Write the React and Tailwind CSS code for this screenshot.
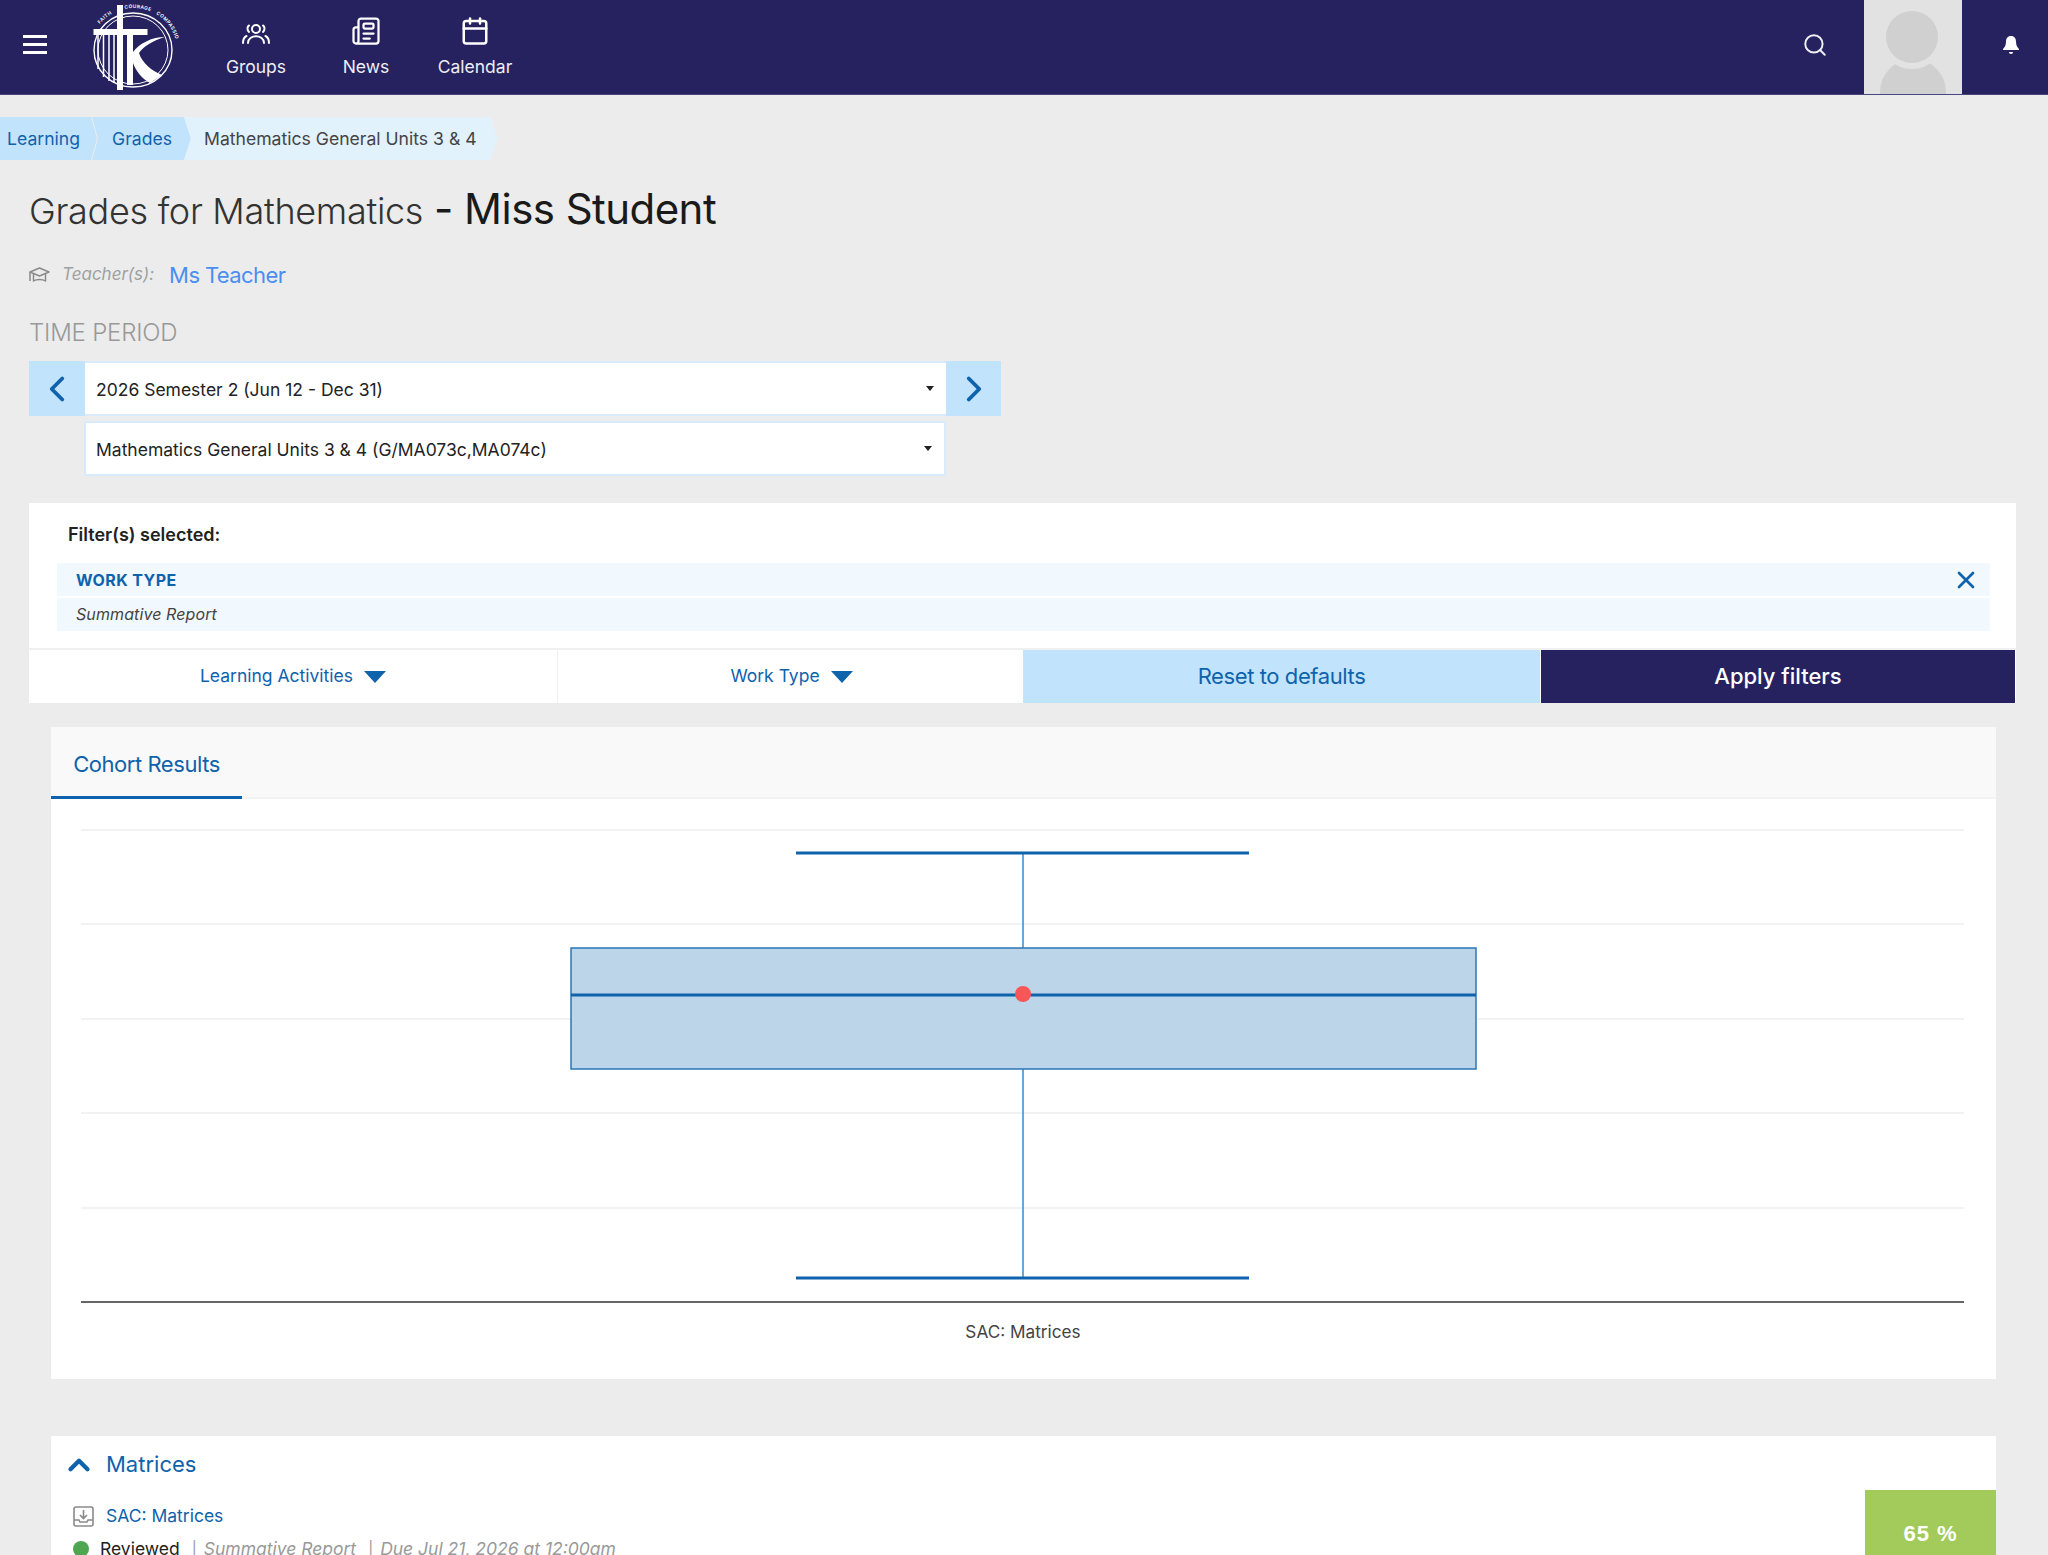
import React from "react";
import { ChevronLeft, ChevronRight, ChevronUp, Newspaper, Calendar, Search, X } from "lucide-react";

const BLUE = "#0f62ac";

const Logo = () => (
  <svg width="86" height="90" viewBox="0 0 86 90" className="shrink-0 overflow-visible">
    <defs>
      <path id="logoArc" d="M5 25 A43 41 0 0 1 84 38" />
    </defs>
    <ellipse cx="41" cy="47" rx="39" ry="37" fill="none" stroke="#fff" strokeWidth="1.400" />
    <ellipse cx="41" cy="47" rx="35" ry="34" fill="none" stroke="#fff" strokeWidth="1" />
    <g fontSize="4.800" fontFamily="Inter, sans-serif" fontWeight="600" fill="#fff" letterSpacing="0.4">
      <text><textPath href="#logoArc" startOffset="5%">FAITH</textPath></text>
      <text><textPath href="#logoArc" startOffset="34%">COURAGE</textPath></text>
      <text><textPath href="#logoArc" startOffset="66%">COMPASSION</textPath></text>
    </g>
    <path d="M6 32v34M11.500 32v42M17 32v46M22 32v48" stroke="#fff" strokeWidth="1.500" />
    <rect x="25" y="2" width="6" height="85" fill="#fff" />
    <rect x="1.500" y="26" width="54" height="6" fill="#fff" />
    <rect x="35" y="32" width="6" height="50" fill="#fff" />
    <path d="M41 49 C48 40 60 34 73 34 C60 38 51 44 47 50 C50 60 60 68 70 72 L58 80 C50 76 44 68 41 60 Z" fill="#fff" />
  </svg>
);

const GroupsIcon = () => (
  <svg width="30" height="24" viewBox="0 0 30 24" fill="none" stroke="#fff" strokeWidth="2" strokeLinecap="round">
    <circle cx="15" cy="7" r="4" />
    <path d="M8 3.500c-2 1-2 5 0 6.500M22 3.500c2 1 2 5 0 6.500" />
    <path d="M7 21c0-9 16-9 16 0" />
    <path d="M2 21c0-4 1.500-6 3.500-7M28 21c0-4-1.500-6-3.500-7" />
  </svg>
);

const NavItem = ({ icon, label, className }) => (
  <div className={`flex flex-col items-center ${className}`}>
    <div className="h-[30px] flex items-end justify-center">{icon}</div>
    <span className="mt-[10px] text-[17.500px] leading-[22px] text-[#eeeef4]">{label}</span>
  </div>
);

const Crumb = ({ children, className }) => (
  <div className={`h-[43px] flex items-center pt-[1px] text-[17.600px] ${className}`}>{children}</div>
);

const SelectBox = ({ children, className }) => (
  <div className={`h-[55px] bg-white border-y-2 border-[#d9ebfa] flex items-center justify-between pr-[12px] text-[17.500px] text-[#222] ${className}`}>
    <span className="pt-[3px]">{children}</span>
    <span className="w-0 h-0 border-l-[4px] border-r-[4px] border-t-[5px] border-l-transparent border-r-transparent border-t-[#222]" />
  </div>
);

const FilterToggle = ({ label, className }) => (
  <div className={`h-full flex items-center justify-center gap-[11px] text-[17.500px] text-[#0f62ac] ${className}`}>
    {label}
    <span className="w-0 h-0 border-l-[11px] border-r-[11px] border-t-[12px] border-l-transparent border-r-transparent border-t-[#0f62ac]" />
  </div>
);

const BoxPlot = () => (
  <svg width="1945" height="580" viewBox="0 0 1945 580" className="block">
    {[31, 125, 220, 314, 409].map((y) => (
      <line key={y} x1="30" x2="1913" y1={y} y2={y} stroke="#eeeeee" strokeWidth="1.500" />
    ))}
    <line x1="30" x2="1913" y1="503" y2="503" stroke="#666" strokeWidth="2" />
    <line x1="972" x2="972" y1="54" y2="149" stroke="#3d88c6" strokeWidth="1.500" />
    <line x1="972" x2="972" y1="270" y2="479" stroke="#3d88c6" strokeWidth="1.500" />
    <line x1="745" x2="1198" y1="54" y2="54" stroke={BLUE} strokeWidth="3" />
    <line x1="745" x2="1198" y1="479" y2="479" stroke={BLUE} strokeWidth="3" />
    <rect x="520" y="149" width="905" height="121" fill="#bdd5e9" stroke="#2a76b8" strokeWidth="1.500" />
    <line x1="520" x2="1425" y1="196" y2="196" stroke={BLUE} strokeWidth="3" />
    <circle cx="972" cy="195" r="8" fill="#f95757" />
    <text x="972" y="539" textAnchor="middle" fontSize="17.200" fontFamily="Inter, sans-serif" fill="#444">SAC: Matrices</text>
  </svg>
);

export default function App() {
  return (
    <div className="h-[1555px] overflow-hidden bg-[#ececec] font-['Inter',sans-serif] text-[#222]">
      {/* top nav */}
      <header className="h-[95px] bg-[#262260] border-b border-[#4a4680] flex items-start">
        <div className="pl-[23px] pt-[35px] flex flex-col gap-[5px] w-[92px] shrink-0">
          <span className="w-[24px] h-[3px] bg-white" />
          <span className="w-[24px] h-[3px] bg-white" />
          <span className="w-[24px] h-[3px] bg-white" />
        </div>
        <div className="pt-[3px]"><Logo /></div>
        <div className="flex pt-[16px]">
          <NavItem icon={<GroupsIcon />} label="Groups" className="w-[110px] ml-[23px]" />
          <NavItem icon={<Newspaper size={30} color="#fff" strokeWidth={1.800} />} label="News" className="w-[110px]" />
          <NavItem icon={<Calendar size={30} color="#fff" strokeWidth={2} />} label="Calendar" className="w-[108px]" />
        </div>
        <div className="ml-auto flex h-[94px]">
          <div className="w-[50px] flex items-center justify-start mr-[13px] pb-[4px]">
            <Search size={26} color="#eeeef4" strokeWidth={1.800} className="ml-[1px]" />
          </div>
          <div className="w-[98px] h-[94px] bg-[#e2e2e2] relative overflow-hidden">
            <span className="absolute left-[16px] top-[59px] w-[66px] h-[66px] rounded-full bg-[#d0d0d0]" />
            <span className="absolute left-[15px] top-[3px] w-[66px] h-[66px] rounded-full bg-[#e2e2e2]" />
            <span className="absolute left-[22px] top-[11px] w-[52px] h-[52px] rounded-full bg-[#d0d0d0]" />
          </div>
          <div className="w-[86px] flex items-center justify-center pl-[12px] pb-[4px]">
            <svg width="18" height="20" viewBox="0 0 18 20" fill="#fff">
              <path d="M9 1c-3.500 0-5 2.500-5 5.500 0 4-1.500 6-3 7.500v1h16v-1c-1.500-1.500-3-3.500-3-7.500C14 3.500 12.500 1 9 1z" />
              <path d="M7 17h4c0 1-.8 2-2 2s-2-1-2-2z" />
            </svg>
          </div>
        </div>
      </header>

      {/* breadcrumb */}
      <nav className="flex mt-[22px] h-[43px]">
        <Crumb className="w-[97px] pl-[7px] bg-[#c2e3fc] text-[#0f62ac] [clip-path:polygon(0_0,91px_0,97px_50%,91px_100%,0_100%)]">Learning</Crumb>
        <Crumb className="w-[99px] -ml-[5px] pl-[20px] bg-[#c2e3fc] text-[#0f62ac] [clip-path:polygon(0_0,92px_0,99px_50%,92px_100%,0_100%,6px_50%)]">Grades</Crumb>
        <Crumb className="w-[314px] -ml-[7px] pl-[20px] bg-[#e2f2fd] text-[#444] [clip-path:polygon(0_0,306px_0,314px_50%,306px_100%,0_100%,7px_50%)]">Mathematics General Units 3 &amp; 4</Crumb>
      </nav>

      <main className="px-[29px]">
        <h1 className="mt-[24px] h-[50px] flex items-baseline leading-[50px]">
          <span className="text-[36px] font-light tracking-[-0.3px] text-[#333]">Grades for Mathematics</span>
          <span className="ml-[11px] text-[42px] font-normal tracking-[-0.55px] text-[#1a1a1a]">- Miss Student</span>
        </h1>

        <div className="mt-[26px] h-[30px] flex items-center">
          <svg width="21" height="19" viewBox="0 0 21 19" fill="none" stroke="#8a8a8a" strokeWidth="1.500" strokeLinejoin="round">
            <path d="M1 6l9.500-4L20 6l-9.500 4z" />
            <path d="M4.500 8v7c3-2 9-2 12 0V8" />
            <path d="M1 6v9" />
          </svg>
          <span className="ml-[12px] text-[17px] italic text-[#a0a0a0]">Teacher(s):</span>
          <span className="ml-[15px] text-[22px] tracking-[-0.6px] text-[#4a8ff0]">Ms Teacher</span>
        </div>

        <div className="mt-[28px] h-[30px] text-[24px] leading-[30px] font-light tracking-[-0.2px] text-[#999]">TIME PERIOD</div>

        <div className="mt-[13px] flex h-[55px]">
          <div className="w-[56px] bg-[#c2e3fc] flex items-center justify-center">
            <ChevronLeft size={42} color={BLUE} strokeWidth={2.200} />
          </div>
          <SelectBox className="w-[861px] pl-[11px]">2026 Semester 2 (Jun 12 - Dec 31)</SelectBox>
          <div className="w-[55px] bg-[#c2e3fc] flex items-center justify-center">
            <ChevronRight size={42} color={BLUE} strokeWidth={2.200} />
          </div>
        </div>
        <SelectBox className="mt-[5px] ml-[55px] w-[862px] border-x-2 pl-[10px]">Mathematics General Units 3 &amp; 4 (G/MA073c,MA074c)</SelectBox>

        {/* filters */}
        <section className="mt-[27px] w-[1987px] bg-white">
          <div className="pl-[28px] pr-[26px] pt-[21px] pb-[17px]">
            <div className="h-[22px] leading-[22px] ml-[11px] text-[18px] font-semibold text-[#222]">Filter(s) selected:</div>
            <div className="mt-[17px] h-[33px] bg-[#f1f8fe] flex items-center justify-between pl-[19px] pr-[10px]">
              <span className="text-[16px] font-bold tracking-[0.4px] text-[#0f62ac]">WORK TYPE</span>
              <X size={28} color={BLUE} strokeWidth={2.300} />
            </div>
            <div className="mt-[2px] h-[33px] bg-[#f1f8fe] flex items-center pl-[19px] pb-[2px] text-[16px] italic tracking-[0.1px] text-[#444]">Summative Report</div>
          </div>
          <div className="h-[55px] border-t-2 border-[#f0f0f0] flex">
            <FilterToggle label="Learning Activities" className="w-[529px] border-r border-[#f0f0f0]" />
            <FilterToggle label="Work Type" className="w-[465px] pl-[2px]" />
            <div className="w-[517px] bg-[#c2e3fc] flex items-center justify-center text-[22px] tracking-[-0.4px] text-[#0f62ac]">Reset to defaults</div>
            <div className="w-[475px] bg-[#262260] border-l border-white flex items-center justify-center text-[22px] font-medium text-white">Apply filters</div>
          </div>
        </section>

        {/* cohort results */}
        <section className="mt-[24px] ml-[22px] w-[1945px] bg-white">
          <div className="h-[72px] bg-[#f9f9f9] border-b-2 border-[#f3f3f3]">
            <div className="w-[191px] h-[72px] border-b-[3px] border-[#0f62ac] flex items-center justify-center pt-[6px] text-[22px] tracking-[-0.45px] text-[#0f62ac]">Cohort Results</div>
          </div>
          <BoxPlot />
        </section>

        {/* matrices */}
        <section className="mt-[57px] ml-[22px] w-[1945px] h-[200px] bg-white relative">
          <div className="pt-[7px] flex items-center h-[50px]">
            <ChevronUp size={34} color={BLUE} strokeWidth={3} className="ml-[11px]" />
            <span className="ml-[10px] text-[22px] text-[#0f62ac]">Matrices</span>
          </div>
          <div className="mt-[18px] flex items-center h-[24px] pl-[22px]">
            <svg width="21" height="21" viewBox="0 0 21 21" fill="none" stroke="#8a8a8a" strokeWidth="1.600">
              <rect x="1" y="1" width="19" height="19" rx="2" />
              <path d="M10.500 4v8M7 9l3.500 3.500L14 9M1 14h5l1 2h7l1-2h5" />
            </svg>
            <span className="ml-[12px] text-[17.500px] text-[#0f62ac]">SAC: Matrices</span>
          </div>
          <div className="mt-[9px] flex items-center h-[24px] pl-[22px] text-[17.500px]">
            <span className="w-[16px] h-[16px] rounded-full bg-[#4fa651]" />
            <span className="ml-[11px] text-[#222]">Reviewed</span>
            <span className="ml-[12px] text-[15px] text-[#999]">|</span>
            <span className="ml-[7px] italic text-[#999]">Summative Report</span>
            <span className="ml-[12px] text-[15px] text-[#999]">|</span>
            <span className="ml-[7px] italic text-[#999]">Due Jul 21, 2026 at 12:00am</span>
          </div>
          <div className="absolute right-0 top-[54px] w-[131px] h-[146px] bg-[#a2cb5c] text-center pt-[27px] font-['Liberation_Sans',sans-serif] text-[22px] font-bold tracking-[1px] text-white">65 %</div>
        </section>
      </main>
    </div>
  );
}
